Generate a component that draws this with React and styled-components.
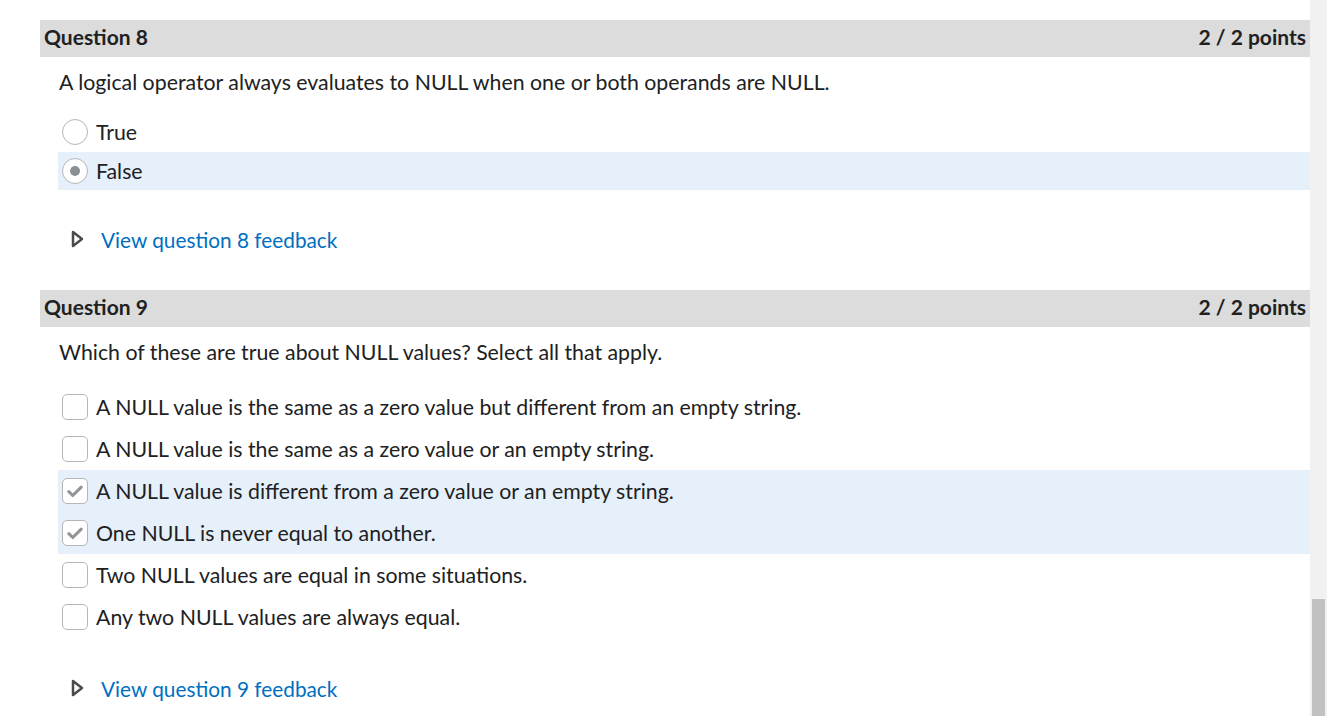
import React from "react";
import styled, { createGlobalStyle } from "styled-components";

const GlobalStyle = createGlobalStyle`
  html, body {
    margin: 0;
    padding: 0;
    background: #ffffff;
    font-family: Lato, "Noto Sans", sans-serif;
    color: #202122;
  }
`;

const Page = styled.div`
  display: flex;
  width: 1337px;
  height: 716px;
  overflow: hidden;
`;

const Main = styled.div`
  width: 1270px;
  padding: 20px 0 0 40px;
`;

const Scrollbar = styled.div`
  width: 17px;
  height: 716px;
  background: #f1f1f1;
  display: flex;
  flex-direction: column;
  justify-content: flex-end;
  align-items: center;
`;

const Thumb = styled.div`
  width: 13px;
  height: 117px;
  background: #c1c1c1;
`;

const Section = styled.section`
  display: flex;
  flex-direction: column;
  margin-bottom: ${(p) => p.$gap || 0}px;
`;

const Header = styled.div`
  height: 37px;
  background: #dcdcdc;
  display: flex;
  align-items: center;
  justify-content: space-between;
  padding: 0 4px 4px;
  box-sizing: border-box;
  font-size: 21px;
  font-weight: 700;
  color: #202122;
`;

const Prompt = styled.p`
  margin: 11px 0 ${(p) => p.$after}px 19px;
  font-size: 21.3px;
  line-height: 28px;
`;

const Options = styled.div`
  display: flex;
  flex-direction: column;
  margin-left: 18px;
`;

const Option = styled.div`
  height: ${(p) => p.$h}px;
  display: flex;
  align-items: center;
  gap: 8px;
  padding: 0 0 ${(p) => p.$lift || 0}px 4px;
  box-sizing: border-box;
  background: ${(p) => (p.$selected ? "#e6f0fa" : "transparent")};
  font-size: 21.3px;
`;

const Radio = styled.span`
  width: 24px;
  height: 24px;
  border-radius: 50%;
  border: 1px solid #b4b6b8;
  background: #fff;
  display: flex;
  align-items: center;
  justify-content: center;
  flex-shrink: 0;

  &::after {
    content: "";
    display: ${(p) => (p.$checked ? "block" : "none")};
    width: 10px;
    height: 10px;
    border-radius: 50%;
    background: #8b8e92;
  }
`;

const Box = styled.span`
  width: 24px;
  height: 24px;
  border-radius: 5px;
  border: 1px solid #b4b6b8;
  background: #fff;
  display: flex;
  align-items: center;
  justify-content: center;
  flex-shrink: 0;
`;

const Feedback = styled.div`
  display: flex;
  align-items: center;
  gap: 17px;
  margin: ${(p) => p.$top}px 0 0 31px;
  height: 28px;
  font-size: 20.8px;
  color: #006fbf;
`;

function Check({ on }) {
  return (
    <Box>
      {on && (
        <svg width="18" height="18" viewBox="0 0 16 16">
          <polyline
            points="2.5,8.5 6,12 13.5,4.5"
            fill="none"
            stroke="#939699"
            strokeWidth="2.8"
            strokeLinecap="round"
            strokeLinejoin="round"
          />
        </svg>
      )}
    </Box>
  );
}

function Caret() {
  return (
    <svg width="13" height="18" viewBox="0 0 13 18">
      <polygon
        points="2,2 11,9 2,16"
        fill="none"
        stroke="#494c4e"
        strokeWidth="2.5"
        strokeLinejoin="round"
      />
    </svg>
  );
}

const q9 = [
  ["A NULL value is the same as a zero value but different from an empty string.", false],
  ["A NULL value is the same as a zero value or an empty string.", false],
  ["A NULL value is different from a zero value or an empty string.", true],
  ["One NULL is never equal to another.", true],
  ["Two NULL values are equal in some situations.", false],
  ["Any two NULL values are always equal.", false],
];

export default function App() {
  return (
    <Page>
      <GlobalStyle />
      <Main>
        <Section $gap={37}>
          <Header>
            <span>Question 8</span>
            <span>2 / 2 points</span>
          </Header>
          <Prompt $after={18}>
            A logical operator always evaluates to NULL when one or both operands are NULL.
          </Prompt>
          <Options>
            <Option $h={38} $lift={3}>
              <Radio />
              True
            </Option>
            <Option $h={38} $selected>
              <Radio $checked />
              False
            </Option>
          </Options>
          <Feedback $top={35}>
            <Caret />
            View question 8 feedback
          </Feedback>
        </Section>
        <Section>
          <Header>
            <span>Question 9</span>
            <span>2 / 2 points</span>
          </Header>
          <Prompt $after={20}>Which of these are true about NULL values? Select all that apply.</Prompt>
          <Options>
            {q9.map(([text, on]) => (
              <Option key={text} $h={42} $selected={on}>
                <Check on={on} />
                {text}
              </Option>
            ))}
          </Options>
          <Feedback $top={36}>
            <Caret />
            View question 9 feedback
          </Feedback>
        </Section>
      </Main>
      <Scrollbar>
        <Thumb />
      </Scrollbar>
    </Page>
  );
}
